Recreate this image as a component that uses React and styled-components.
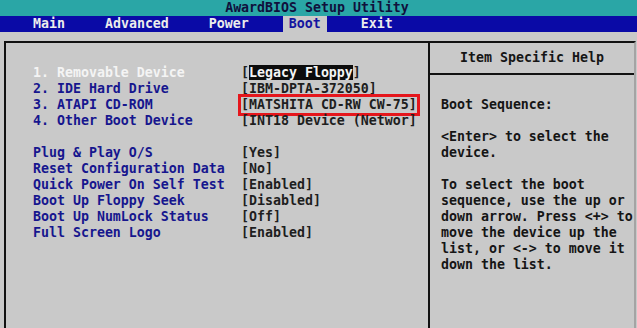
import React from 'react'
import styled, { createGlobalStyle } from 'styled-components'

const menu = ['Main', 'Advanced', 'Power', 'Boot', 'Exit']

const bootOrder = [
  { label: '1. Removable Device', value: 'Legacy Floppy', kind: 'current', selected: true },
  { label: '2. IDE Hard Drive', value: 'IBM-DPTA-372050' },
  { label: '3. ATAPI CD-ROM', value: 'MATSHITA CD-RW CW-75', kind: 'marked' },
  { label: '4. Other Boot Device', value: 'INT18 Device (Networ' },
]

const options = [
  { label: 'Plug & Play O/S', value: 'Yes' },
  { label: 'Reset Configuration Data', value: 'No' },
  { label: 'Quick Power On Self Test', value: 'Enabled' },
  { label: 'Boot Up Floppy Seek', value: 'Disabled' },
  { label: 'Boot Up NumLock Status', value: 'Off' },
  { label: 'Full Screen Logo', value: 'Enabled' },
]

const help = [
  'Boot Sequence:',
  '',
  '<Enter> to select the',
  'device.',
  '',
  'To select the boot',
  'sequence, use the up or',
  'down arrow. Press <+> to',
  'move the device up the',
  'list, or <-> to move it',
  'down the list.',
]

function Value({ item }) {
  if (item.kind === 'current') {
    return (
      <ValueText>
        [<Highlight>{item.value}</Highlight>]
      </ValueText>
    )
  }
  if (item.kind === 'marked') {
    return (
      <ValueText>
        <Marked>[{item.value}]</Marked>
      </ValueText>
    )
  }
  return <ValueText>[{item.value}]</ValueText>
}

function Group({ items }) {
  return (
    <Settings>
      {items.map((item) => (
        <React.Fragment key={item.label}>
          <Label $selected={item.selected}>{item.label}</Label>
          <Value item={item} />
        </React.Fragment>
      ))}
    </Settings>
  )
}

export default function App() {
  return (
    <Screen>
      <GlobalStyle />
      <TitleBar>AwardBIOS Setup Utility</TitleBar>
      <MenuBar>
        {menu.map((m) => (
          <MenuTab key={m} $active={m === 'Boot'}>
            {m}
          </MenuTab>
        ))}
      </MenuBar>
      <Panel>
        <Main>
          <Group items={bootOrder} />
          <Group items={options} />
        </Main>
        <Help>
          <HelpTitle>Item Specific Help</HelpTitle>
          <HelpBody>
            {help.map((line, i) => (
              <HelpLine key={i}>{line}</HelpLine>
            ))}
          </HelpBody>
        </Help>
      </Panel>
    </Screen>
  )
}

const GlobalStyle = createGlobalStyle`
  html, body {
    margin: 0;
    background: #c9c9c9;
    overflow: hidden;
  }

  body {
    font-family: "DejaVu Sans Mono", "Liberation Mono", monospace;
    font-size: 13.28px;
    font-weight: bold;
    line-height: 16px;
  }
`

const Screen = styled.div`
  width: 637px;
  height: 328px;
  display: flex;
  flex-direction: column;
  overflow: hidden;
  background: #c9c9c9;
`

const TitleBar = styled.div`
  height: 16px;
  background: #2aa6a6;
  color: #10103c;
  text-align: center;
  padding-right: 3px;
`

const MenuBar = styled.nav`
  height: 16px;
  display: flex;
  gap: 28px;
  padding-left: 27px;
  background: #0a0aa6;
`

const MenuTab = styled.div`
  padding: 0 6px;
  color: ${(p) => (p.$active ? '#1414a0' : '#ececec')};
  background: ${(p) => (p.$active ? '#c9c9c9' : 'transparent')};
`

const Panel = styled.section`
  flex: 1;
  margin: 9px 1px 0 4px;
  border: 2px solid #111;
  border-right-color: #a4a4a4;
  border-bottom: none;
  display: grid;
  grid-template-columns: 422px 1fr;
`

const Main = styled.div`
  padding: 22px 0 0 27px;
  display: flex;
  flex-direction: column;
  gap: 16px;
`

const Settings = styled.div`
  display: grid;
  grid-template-columns: 208px auto;
  grid-auto-rows: 16px;
`

const Label = styled.div`
  color: ${(p) => (p.$selected ? '#f4f4f4' : '#16168e')};
  white-space: pre;
`

const ValueText = styled.div`
  color: #1e1e1e;
  white-space: pre;
`

const Highlight = styled.span`
  background: #0c0c0c;
  color: #f4f4f4;
`

const Marked = styled.span`
  display: inline-block;
  line-height: 16px;
  outline: 3px solid #e5161c;
  outline-offset: 0;
`

const Help = styled.aside`
  border-left: 2px solid #111;
  display: flex;
  flex-direction: column;
`

const HelpTitle = styled.div`
  height: 30px;
  line-height: 30px;
  text-align: center;
  color: #151515;
  border-bottom: 2px solid #111;
`

const HelpBody = styled.div`
  padding: 22px 0 0 11px;
  color: #151515;
`

const HelpLine = styled.div`
  height: 16px;
  white-space: pre;
`
